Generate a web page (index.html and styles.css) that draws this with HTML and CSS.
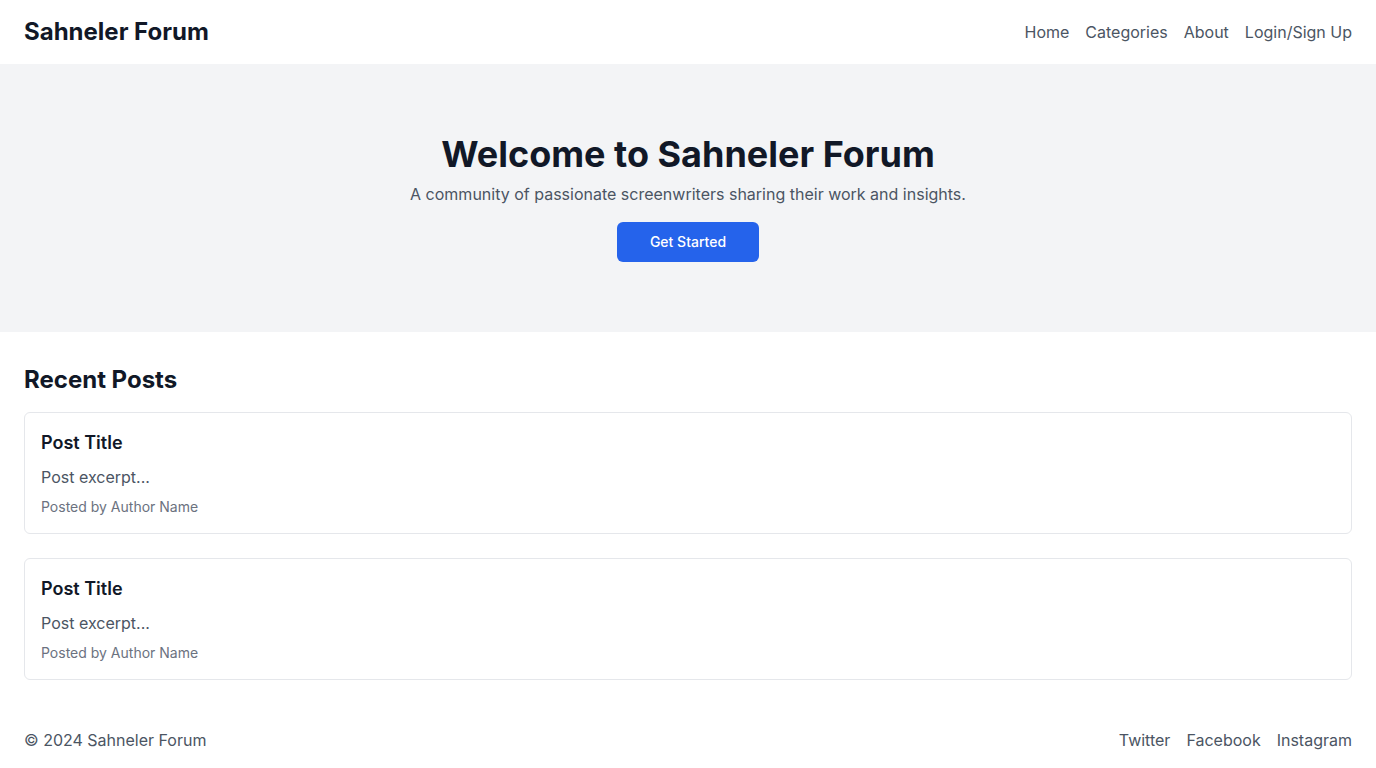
FILE: index.html
```html
<!DOCTYPE html>
<html lang="en">
<head>
<meta charset="utf-8">
<title>Sahneler Forum</title>
<link rel="stylesheet" href="styles.css">
</head>
<body>
<header class="site-header">
  <div class="logo">Sahneler Forum</div>
  <nav class="nav">
    <a href="#">Home</a>
    <a href="#">Categories</a>
    <a href="#">About</a>
    <a href="#">Login/Sign Up</a>
  </nav>
</header>
<section class="hero">
  <h1 class="hero-title">Welcome to Sahneler Forum</h1>
  <p class="hero-sub">A community of passionate screenwriters sharing their work and insights.</p>
  <button class="btn">Get Started</button>
</section>
<main class="main">
  <h2 class="section-title">Recent Posts</h2>
  <div class="posts">
    <article class="card">
      <h3 class="card-title">Post Title</h3>
      <p class="card-excerpt">Post excerpt...</p>
      <p class="card-meta">Posted by Author Name</p>
    </article>
    <article class="card">
      <h3 class="card-title">Post Title</h3>
      <p class="card-excerpt">Post excerpt...</p>
      <p class="card-meta">Posted by Author Name</p>
    </article>
  </div>
</main>
<footer class="site-footer">
  <div class="copy">© 2024 Sahneler Forum</div>
  <nav class="footer-links">
    <a href="#">Twitter</a>
    <a href="#">Facebook</a>
    <a href="#">Instagram</a>
  </nav>
</footer>
</body>
</html>
```
FILE: styles.css
```css
* { box-sizing: border-box; margin: 0; padding: 0; }
html, body { background: #ffffff; }
body {
  font-family: Inter, "Noto Sans", sans-serif;
  font-size: 16px;
  line-height: 24px;
  color: #111827;
}
a { text-decoration: none; color: inherit; }

.site-header {
  height: 64px;
  padding: 0 24px;
  display: flex;
  align-items: center;
  justify-content: space-between;
}
.logo {
  font-size: 24px;
  line-height: 32px;
  font-weight: 700;
  color: #111827;
}
.nav { display: flex; gap: 16px; }
.nav a { color: #4b5563; font-size: 16px; line-height: 24px; }

.hero {
  background: #f3f4f6;
  padding: 70px 24px;
  display: flex;
  flex-direction: column;
  align-items: center;
  text-align: center;
}
.hero-title {
  font-size: 36px;
  line-height: 40px;
  font-weight: 700;
  color: #111827;
  margin-bottom: 8px;
}
.hero-sub {
  color: #4b5563;
  font-size: 16px;
  line-height: 24px;
  margin-bottom: 16px;
}
.btn {
  background: #2563eb;
  color: #ffffff;
  border: none;
  border-radius: 6px;
  height: 40px;
  width: 142px;
  font-family: Inter, "Noto Sans", sans-serif;
  font-size: 14px;
  font-weight: 500;
  line-height: 20px;
  cursor: pointer;
}

.main { padding: 32px 24px; }
.section-title {
  font-size: 24px;
  line-height: 32px;
  font-weight: 700;
  color: #111827;
  margin-bottom: 16px;
}
.posts { display: flex; flex-direction: column; gap: 24px; }
.card {
  border: 1px solid #e5e7eb;
  border-radius: 6px;
  padding: 16px;
  background: #ffffff;
}
.card-title {
  font-size: 18px;
  line-height: 28px;
  font-weight: 600;
  color: #111827;
  margin-bottom: 8px;
}
.card-excerpt {
  color: #4b5563;
  font-size: 16px;
  line-height: 24px;
  margin-bottom: 8px;
}
.card-meta {
  color: #6b7280;
  font-size: 14px;
  line-height: 20px;
}

.site-footer {
  padding: 16px 24px;
  display: flex;
  justify-content: space-between;
  align-items: center;
  color: #4b5563;
}
.footer-links { display: flex; gap: 16px; }
.footer-links a { color: #4b5563; }
```
